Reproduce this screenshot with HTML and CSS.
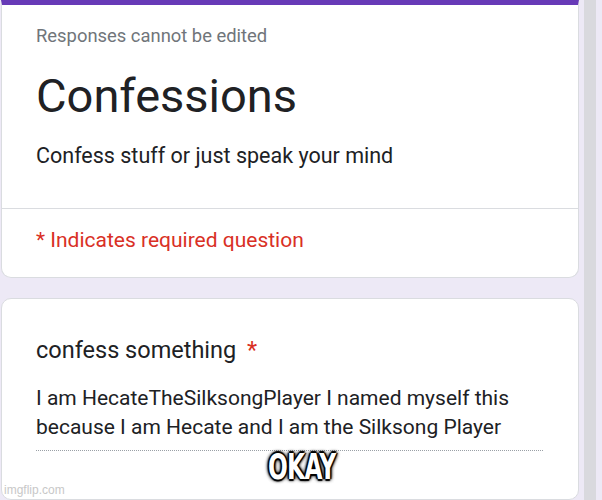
FILE: index.html
```html
<html>
<head>
<title>Confessions</title>
<link rel="stylesheet" href="styles.css">
</head>
<body>
<div class="page">
  <div class="column">
    <div class="card headCard">
      <div class="headTop">
        <p class="note">Responses cannot be edited</p>
        <h1 class="title">Confessions</h1>
        <p class="desc">Confess stuff or just speak your mind</p>
      </div>
      <div class="headBottom">
        <p class="required">* Indicates required question</p>
      </div>
    </div>
    <div class="card question">
      <p class="qTitle">confess something <span class="star">*</span></p>
      <p class="answer">I am HecateTheSilksongPlayer I named myself this because I am Hecate and I am the Silksong Player</p>
    </div>
  </div>
  <div class="scrollbar"></div>
</div>
<div class="caption">OKAY</div>
<div class="watermark">imgflip.com</div>
</body>
</html>
```
FILE: styles.css
```css
body {margin: 0;
      background-color: #ede9f6;
      font-family: Roboto, "Noto Sans", sans-serif;
      width: 602px; height: 500px; overflow: hidden;}
p, h1 {margin: 0;}
.page {display: flex; gap: 5px; height: 500px;}
.column {width: 578px; margin-left: 1px;
         display: flex; flex-direction: column; gap: 20px;}
.card {background-color: white;
       border: 1px solid #dadce0;
       border-radius: 10px;}
.headCard {border-top: 5px solid #673ab7;
           border-top-left-radius: 0; border-top-right-radius: 0;
           height: 278px; box-sizing: border-box; flex: none;}
.headTop {padding: 21px 34px 0; height: 204px; box-sizing: border-box;
          border-bottom: 1px solid #dadce0;}
.note {font-size: 18.4px; color: #70757a; line-height: 20px;}
.title {font-size: 47px; font-weight: 400; color: #202124;
        line-height: 56px; margin-top: 22px;}
.desc {font-size: 21.5px; color: #202124; line-height: 26px; margin-top: 19px;}
.headBottom {padding: 18px 34px 0;}
.required {font-size: 21px; color: #d93025; line-height: 26px;}
.question {flex: 1; padding: 37px 34px 0;}
.qTitle {font-size: 23.5px; color: #202124; line-height: 28px;}
.star {color: #d93025; margin-left: 5px;}
.answer {font-size: 21px; color: #202124; line-height: 29px;
         margin-top: 20px; width: 507px;
         border-bottom: 1px dotted #9aa0a6; padding-bottom: 8px;}
.scrollbar {width: 12px; background-color: #d9d9de;}
.caption {position: absolute; left: 268px; top: 446px;
          font-family: "Liberation Sans Narrow", "DejaVu Sans Condensed", sans-serif;
          font-weight: bold; font-size: 36px; color: white; letter-spacing: -1px;
          transform: scaleX(0.72); transform-origin: left;
          text-shadow: 2px 0 1px black, -2px 0 1px black, 0 2px 1px black, 0 -2px 1px black,
                       0 0 5px black, 0 0 5px black, 0 0 4px black;}
.watermark {position: absolute; left: 4px; top: 483px;
            font-family: "Liberation Sans", sans-serif; font-size: 12px; color: #c8c8c8;}
```
